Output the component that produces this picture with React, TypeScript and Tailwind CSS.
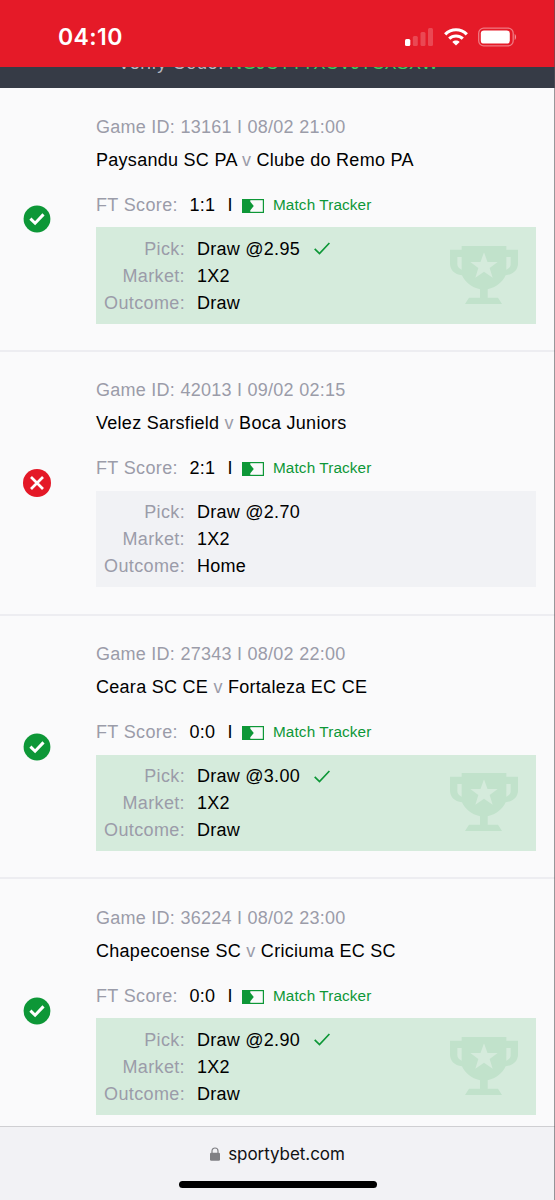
import React from "react";

type Bet = {
  id: string;
  date: string;
  home: string;
  away: string;
  score: string;
  odds: string;
  outcome: string;
  won: boolean;
};

const bets: Bet[] = [
  { id: "13161", date: "08/02 21:00", home: "Paysandu SC PA", away: "Clube do Remo PA", score: "1:1", odds: "2.95", outcome: "Draw", won: true },
  { id: "42013", date: "09/02 02:15", home: "Velez Sarsfield", away: "Boca Juniors", score: "2:1", odds: "2.70", outcome: "Home", won: false },
  { id: "27343", date: "08/02 22:00", home: "Ceara SC CE", away: "Fortaleza EC CE", score: "0:0", odds: "3.00", outcome: "Draw", won: true },
  { id: "36224", date: "08/02 23:00", home: "Chapecoense SC", away: "Criciuma EC SC", score: "0:0", odds: "2.90", outcome: "Draw", won: true },
];

function StatusIcon({ won }: { won: boolean }) {
  return (
    <svg viewBox="0 0 28 28" className="size-7">
      <circle cx="14" cy="14" r={won ? 13.4 : 14} fill={won ? "#0d9737" : "#e41827"} />
      {won ? (
        <path d="M7.4 13.6 12.1 18.2 20.5 9.400" fill="none" stroke="#fff" strokeWidth="3" />
      ) : (
        <path d="M8 8 20 20M20 8 8 20" fill="none" stroke="#fff" strokeWidth="2.7" />
      )}
    </svg>
  );
}

function TrackerIcon() {
  return (
    <svg viewBox="0 0 22 14" className="h-[14px] w-[22px]">
      <rect x=".6" y=".6" width="20.8" height="12.8" fill="none" stroke="#0d9737" strokeWidth="1.2" />
      <path d="M0 0H8.3V2.8L11.8 7 8.3 11.2V14H0Z" fill="#0d9737" />
    </svg>
  );
}

function Trophy() {
  return (
    <svg viewBox="0 0 204 174" className="h-[58px] w-[68px]">
      <path
        fill="#c1e2cb"
        fillRule="evenodd"
        d="M35 0H169V11H204V52C204 72 191 85 167 88C158 108 139 124 113 130V155H144L156 174H45L57 155H90V130C64 124 45 108 36 88C13 85 0 72 0 52V11H35ZM22 33V54C22 62 26 67 35 71V33ZM182 33H169V71C178 67 182 62 182 54Z"
      />
      <path fill="#d5ebdc" d="M102 19 112.5 48H143L119 66 128 95 102 77 76 95 85 66 61 48H91.500Z" />
    </svg>
  );
}

function BetRow({ bet }: { bet: Bet }) {
  return (
    <section className="flex h-[263.8px] shrink-0 border-b-2 border-[#ededf1]">
      <div className="flex w-24 shrink-0 items-center pt-[.5px] pl-[23px]">
        <StatusIcon won={bet.won} />
      </div>
      <div className="flex w-[440px] flex-col pt-[24.500px] text-[18px] tracking-[.26px] text-black">
        <div className="h-[33px] leading-[28px] whitespace-pre text-[#9b9ca9]">
          Game ID: {bet.id} I {bet.date}
        </div>
        <div className="h-[45px] leading-[28px] tracking-[.28px] whitespace-pre">
          {bet.home} <span className="text-[#9b9ca9]">v</span> {bet.away}
        </div>
        <div className="flex h-[36.5px] items-start leading-[28px] whitespace-pre">
          <span className="w-[93.500px] tracking-[.36px] text-[#9b9ca9]">FT Score:</span>
          <span className="w-[38px]">{bet.score}</span>
          <span className="w-[14px]">I</span>
          <span className="mt-[8px] mr-[9.5px]">
            <TrackerIcon />
          </span>
          <span className="text-[15.300px] leading-[27px] tracking-[.12px] text-[#0d9737]">Match Tracker</span>
        </div>
        <div className={`flex h-[96.5px] items-start justify-between pt-[8.5px] ${bet.won ? "bg-[#d5ebdc]" : "bg-[#f1f2f5]"}`}>
          <dl className="grid grid-cols-[89px_auto] gap-x-[12px] leading-[27px]">
            <dt className="text-right tracking-[.36px] text-[#9b9ca9]">Pick:</dt>
            <dd className="flex items-center">
              Draw @{bet.odds}
              {bet.won && (
                <svg viewBox="0 0 16 13" className="mb-px ml-[14px] h-[13px] w-4">
                  <path d="M.7 6.800 5.500 11.500 15.400 1" fill="none" stroke="#0d9737" strokeWidth="1.700" />
                </svg>
              )}
            </dd>
            <dt className="text-right tracking-[.36px] text-[#9b9ca9]">Market:</dt>
            <dd>1X2</dd>
            <dt className="text-right tracking-[.36px] text-[#9b9ca9]">Outcome:</dt>
            <dd>{bet.outcome}</dd>
          </dl>
          {bet.won && (
            <div className="mt-[10.300px] mr-[18px]">
              <Trophy />
            </div>
          )}
        </div>
      </div>
    </section>
  );
}

function StatusBar() {
  return (
    <header className="flex h-[67px] shrink-0 items-start bg-[#e51a28] text-white">
      <div className="w-[347px] pt-[23px] pl-[58px] font-['Inter',sans-serif] text-[23px] leading-[28px] font-semibold tracking-[.4px]">04:10</div>
      <div className="flex w-[208px] items-center pt-[27px] pl-[58px]">
        <svg viewBox="0 0 28 18" className="h-[18px] w-7" fill="#fff">
          <rect x="0" y="11" width="5.300" height="7" rx="1.500" />
          <g opacity=".2">
            <rect x="7.800" y="8" width="5" height="10" rx="1.500" />
            <rect x="15.500" y="4" width="5" height="14" rx="1.500" />
            <rect x="23" y="0" width="5" height="18" rx="1.500" />
          </g>
        </svg>
        <svg viewBox="0 0 24 18" className="ml-[11px] h-[18px] w-6" fill="none" stroke="#fff">
          <path d="M1.200 6.300C7.300.2 16.700.2 22.800 6.300" strokeWidth="3.200" />
          <path d="M5.200 10.700C9.100 7 14.900 7 18.800 10.700" strokeWidth="3.100" />
          <path d="M8.300 13.900C10.400 12.100 13.600 12.100 15.700 13.900L12 17.600Z" fill="#fff" stroke="none" />
        </svg>
        <svg viewBox="0 0 40 20" className="ml-[9px] h-5 w-10">
          <rect x="1.700" y="1.200" width="34.500" height="17.600" rx="5" fill="none" stroke="#fff" strokeOpacity=".42" strokeWidth="1.300" />
          <rect x="3.800" y="3.400" width="29" height="13.200" rx="3.200" fill="#fff" />
          <path d="M37.700 7C39.500 7.800 39.500 12.200 37.700 13Z" fill="#fff" fillOpacity=".5" />
        </svg>
      </div>
    </header>
  );
}

export default function App() {
  return (
    <main className="relative flex h-[1200px] w-[555px] flex-col overflow-hidden bg-[#fafafb] font-['Liberation_Sans',Arial,sans-serif]">
      <StatusBar />
      <div className="h-[21px] shrink-0 overflow-hidden bg-[#363b46]">
        <div className="-mt-[14px] ml-[118px] flex text-[18px] leading-[20px] whitespace-pre">
          <span className="w-[111px] tracking-[.65px] text-[#b6b9c1]">Verify Code:</span>
          <span className="tracking-[.2px] text-[#43c85f]">NGJCYTTXCVJTCXSXW</span>
        </div>
      </div>
      <div className="flex h-[1038px] shrink-0 flex-col overflow-hidden">
        {bets.map((bet) => (
          <BetRow key={bet.id} bet={bet} />
        ))}
      </div>
      <footer className="flex grow flex-col items-center border-t border-[#cfcfd2] bg-[#f2f2f5]">
        <div className="mt-[14px] flex h-[26px] items-center gap-[8px]">
          <svg viewBox="0 0 10 14" className="h-[14px] w-[10px]">
            <rect x="0" y="5.800" width="10" height="8" rx="1.300" fill="#808084" />
            <path d="M2 6.500V4C2 0 8 0 8 4V6.500" fill="none" stroke="#808084" strokeWidth="1.200" />
          </svg>
          <span className="font-['Inter',sans-serif] text-[17px] leading-[26px] tracking-[-.05px] text-[#101012]">sportybet.com</span>
        </div>
        <div className="mt-[13.500px] h-[7px] w-[198px] rounded-full bg-black" />
      </footer>
      <div className="absolute top-0 right-0 h-full w-px bg-[#55555a]/60" />
    </main>
  );
}
